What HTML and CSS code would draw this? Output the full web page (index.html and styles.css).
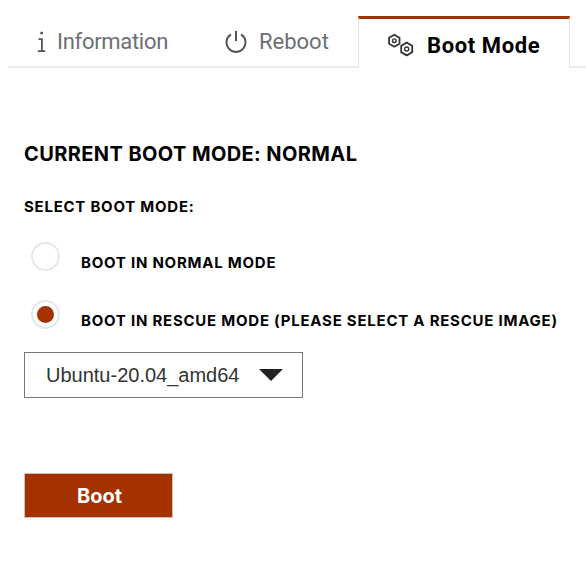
FILE: index.html
```html
<!doctype html>
<html lang="en-US">
	<head>
		<title>Boot Mode</title>
		<meta charset="UTF-8">
		<link rel="stylesheet" href="styles.css">
	</head>

	<body>
		<div class="tabs">
			<div class="tab tab-info">
				<svg width="10" height="22" viewBox="0 0 10 22">
					<circle cx="5.7" cy="3" r="1.5" fill="#555"/>
					<path d="M2.5 9.2H5.9V21.2M1.8 21.2H9.2" fill="none" stroke="#555" stroke-width="1.8"/>
				</svg>
				<span>Information</span>
			</div>
			<div class="tab tab-reboot">
				<svg width="22" height="24" viewBox="0 0 22 24">
					<path d="M11 2V12" fill="none" stroke="#555" stroke-width="2"/>
					<path d="M6 5.4A9.5 9.5 0 1 0 16 5.4" fill="none" stroke="#555" stroke-width="2"/>
				</svg>
				<span>Reboot</span>
			</div>
			<div class="tab tab-active">
				<svg width="28" height="26" viewBox="0 0 28 26">
					<g fill="none" stroke="#333" stroke-linejoin="round">
						<g transform="translate(7.3 8.7)">
							<polygon points="0,-6 5.2,-3 5.2,3 0,6 -5.2,3 -5.2,-3" stroke-width="1.8"/>
							<circle r="1.8" stroke-width="1.4"/>
						</g>
						<g transform="translate(19.7 17)">
							<polygon points="0,-6.4 5.5,-3.2 5.5,3.2 0,6.4 -5.5,3.2 -5.5,-3.2" stroke-width="1.8"/>
							<circle r="2" stroke-width="1.4"/>
						</g>
					</g>
				</svg>
				<span>Boot Mode</span>
			</div>
		</div>

		<div class="content">
			<h1>CURRENT BOOT MODE: NORMAL</h1>
			<p class="select-title">SELECT BOOT MODE:</p>

			<div class="option option-normal">
				<span class="radio"></span>
				<span class="option-label">BOOT IN NORMAL MODE</span>
			</div>
			<div class="option option-rescue">
				<span class="radio radio-on"></span>
				<span class="option-label">BOOT IN RESCUE MODE (PLEASE SELECT A RESCUE IMAGE)</span>
			</div>

			<div class="select-box">
				<span>Ubuntu-20.04_amd64</span>
				<span class="arrow"></span>
			</div>

			<button type="button" class="boot-button">Boot</button>
		</div>
	</body>
</html>
```

FILE: styles.css
```css
* {
	padding: 0;
	margin: 0;
	box-sizing: border-box;
}

body {
	background: #fff;
	color: #000;
	font-family: Inter, 'Liberation Sans', sans-serif;
	height: 563px;
	overflow: hidden;
}

.tabs {
	display: flex;
	margin: 16px 0 0 8px;
	height: 52px;
	border-bottom: 2px solid #eaeaea;
}

.tab {
	display: flex;
	align-items: center;
	font-family: Roboto, sans-serif;
	font-size: 22px;
	color: #6b6f75;
	height: 50px;
}

.tab span {
	padding-top: 1px;
}

.tab-info {
	width: 190px;
	padding-left: 28px;
	gap: 11px;
	letter-spacing: -0.3px;
}

.tab-reboot {
	width: 160px;
	padding-left: 27px;
	gap: 12px;
}

.tab-active {
	width: 212px;
	height: 52px;
	padding: 2px 0 0 28px;
	gap: 12px;
	background: #fff;
	color: #000;
	font-weight: 700;
	letter-spacing: 0.6px;
	border-top: 3px solid #a33200;
	border-left: 1px solid #e4e4e4;
	border-right: 1px solid #e4e4e4;
}

.content {
	padding: 74px 24px 0;
}

h1 {
	font-size: 20px;
	line-height: 24px;
	font-weight: 700;
	letter-spacing: 0.4px;
}

.select-title {
	margin-top: 32px;
	font-size: 15px;
	line-height: 18px;
	font-weight: 700;
	letter-spacing: 0.75px;
}

.option {
	display: flex;
	align-items: center;
	padding-left: 7px;
	gap: 21px;
	height: 30px;
}

.option-normal {
	margin-top: 25px;
}

.option-rescue {
	margin-top: 28px;
}

.option-label {
	font-size: 15px;
	font-weight: 700;
	letter-spacing: 0.76px;
	padding-top: 12px;
}

.radio {
	display: flex;
	align-items: center;
	justify-content: center;
	width: 29px;
	height: 29px;
	border: 2px solid #e8e8e8;
	border-radius: 50%;
	background: #fff;
}

.radio-on::after {
	content: "";
	width: 17px;
	height: 17px;
	border-radius: 50%;
	background: #a33200;
}

.select-box {
	display: flex;
	align-items: center;
	justify-content: space-between;
	width: 279px;
	height: 46px;
	margin-top: 23px;
	padding: 0 19px 0 21px;
	border: 1px solid #777;
	font-family: 'Liberation Sans', sans-serif;
	font-size: 20px;
	color: #333;
}

.arrow {
	width: 0;
	height: 0;
	border-left: 12px solid transparent;
	border-right: 12px solid transparent;
	border-top: 12px solid #222;
}

.boot-button {
	display: block;
	width: 149px;
	height: 45px;
	margin-top: 75px;
	padding-left: 2px;
	background: #a33200;
	border: 1px solid #c9c2bd;
	color: #fff;
	font-family: Inter, sans-serif;
	font-size: 20px;
	font-weight: 700;
}
```
